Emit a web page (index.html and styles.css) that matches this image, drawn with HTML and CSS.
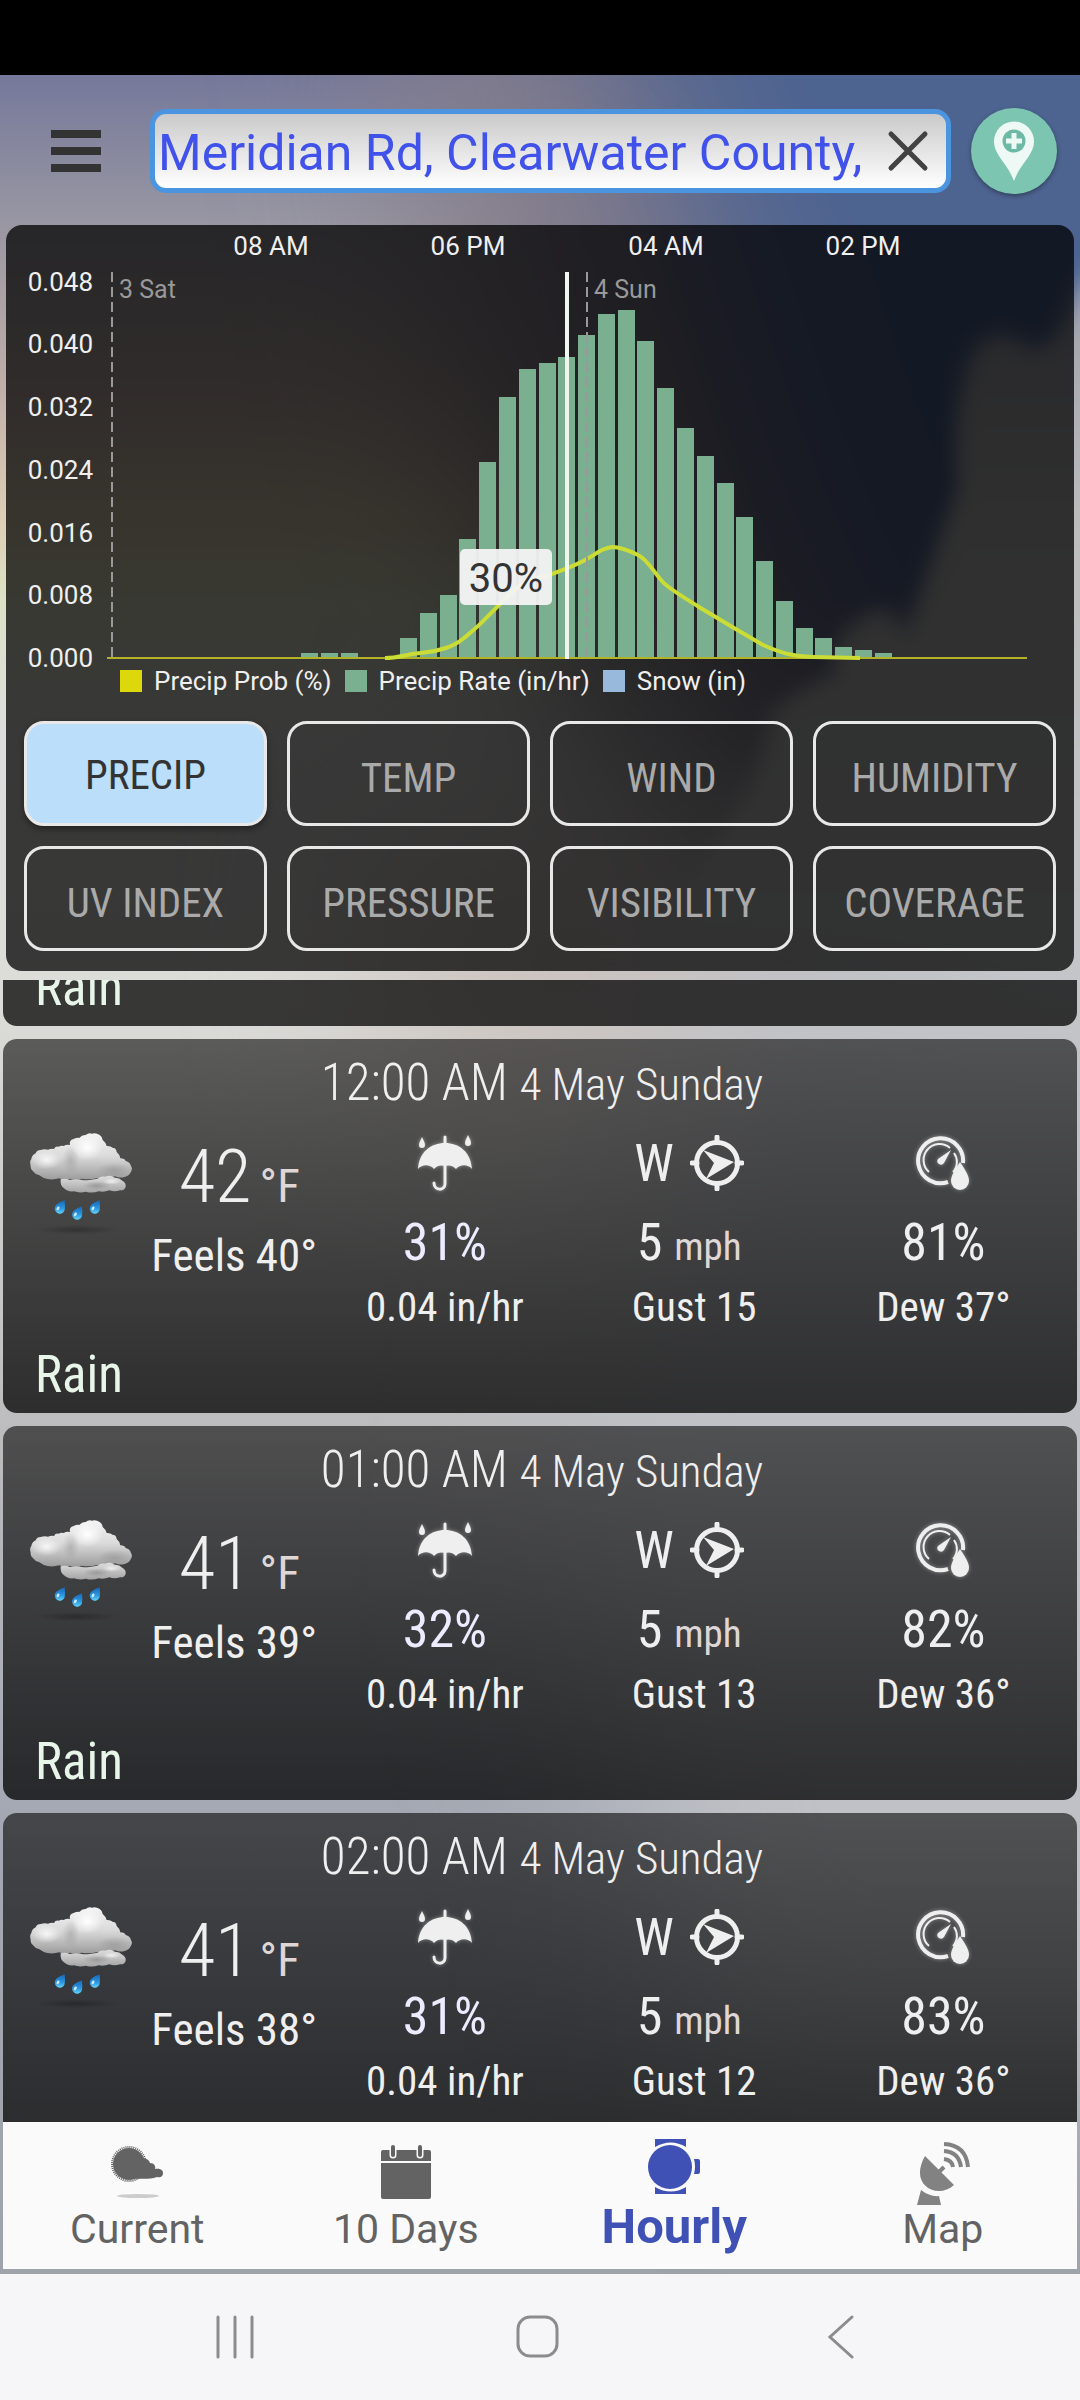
FILE: index.html
```html
<!DOCTYPE html>
<html lang="en">
<head>
<meta charset="utf-8">
<meta name="viewport" content="width=device-width, initial-scale=1">
<title>Hourly forecast</title>
<link rel="stylesheet" href="styles.css">
</head>
<body>
<svg class="defs" aria-hidden="true">
  <defs>
    <linearGradient id="cloudBack" x1="0" y1="0" x2="0" y2="1"><stop offset="0" stop-color="#f4f4f4"/><stop offset=".5" stop-color="#dadada"/><stop offset="1" stop-color="#9c9c9c"/></linearGradient>
    <linearGradient id="cloudFront" x1="0" y1="0" x2="0" y2="1"><stop offset="0" stop-color="#dedede"/><stop offset="1" stop-color="#a4a4a4"/></linearGradient>
    <radialGradient id="cloudGlow"><stop offset="0" stop-color="#fff"/><stop offset="1" stop-color="#fff" stop-opacity="0"/></radialGradient>
    <radialGradient id="cloudShade"><stop offset="0" stop-color="#8c8c8c" stop-opacity=".7"/><stop offset="1" stop-color="#8c8c8c" stop-opacity="0"/></radialGradient>
    <radialGradient id="ground"><stop offset="0" stop-opacity=".25"/><stop offset="1" stop-opacity="0"/></radialGradient>
    <linearGradient id="drop" x1="0" y1="0" x2="0" y2="1"><stop offset="0" stop-color="#1767b8"/><stop offset=".6" stop-color="#2b97e0"/><stop offset="1" stop-color="#63d2fb"/></linearGradient>
  </defs>
  <symbol id="i-rain" viewBox="60 66 306 306">
    <ellipse cx="200" cy="359" rx="125" ry="14" fill="url(#ground)"/>
    <path fill="url(#cloudBack)" d="M112 207Q98 204 88 196Q74 192 69 184Q60 177 62 166Q58 154 64 147Q66 135 77 130Q81 120 92 120Q104 116 114 119Q124 115 132 117Q136 108 146 110Q154 105 161 108Q170 102 180 105Q177 91 189 88Q198 82 208 84Q216 74 227 75Q236 67 246 71Q258 68 269 75Q277 80 278 90Q288 98 290 108Q301 107 309 114Q318 113 320 126Q329 133 331 145Q344 145 347 153Q360 156 363 168Q369 177 362 187Q358 197 346 200Q330 206 316 199Q290 206 262 204Q238 210 214 206Q196 212 178 206Q162 212 148 205Q130 210 112 207Z"/>
    <ellipse cx="232" cy="112" rx="48" ry="38" fill="url(#cloudGlow)"/>
    <ellipse cx="110" cy="150" rx="45" ry="28" fill="url(#cloudGlow)" opacity=".8"/>
    <ellipse cx="182" cy="150" rx="26" ry="42" fill="url(#cloudShade)" opacity=".6"/>
    <ellipse cx="312" cy="182" rx="52" ry="24" fill="url(#cloudShade)" opacity=".7"/>
    <path fill="url(#cloudFront)" d="M152 208Q166 204 180 210Q200 205 220 211Q246 210 262 206Q272 198 286 200Q302 194 314 203Q328 202 337 212Q349 219 347 230Q344 242 330 241Q314 247 298 241Q282 248 266 244Q246 251 228 245Q208 250 192 244Q172 246 162 235Q150 228 152 208Z"/>
    <ellipse cx="260" cy="227" rx="42" ry="13" fill="url(#cloudShade)"/>
    <ellipse cx="305" cy="214" rx="28" ry="10" fill="url(#cloudGlow)" opacity=".7"/>
    <g id="drops">
      <g id="one"><path fill="url(#drop)" d="M164 271Q166 290 164 301A15.500 15.500 0 1 1 139 284Q148 276 164 271Z"/><ellipse cx="144" cy="295" rx="4" ry="6" fill="#c9ecff" transform="rotate(30 144 295)"/></g>
      <use href="#one" x="52" y="18"/>
      <use href="#one" x="105"/>
    </g>
  </symbol>
  <symbol id="i-umbrella" viewBox="0 0 54 56">
    <path d="M27 2v8M27 30v19c0 7-11 7-11-1" fill="none" stroke="currentColor" stroke-width="3" stroke-linecap="round"/>
    <path fill="currentColor" d="M0 34C1 17 13 8 27 8s26 9 27 26c-4-5-12-5-16 0-3-4-8-4-11-3-3-1-8-1-11 3-4-5-12-5-16 0ZM4 2c2 4 3 6 3 8a3 3 0 0 1-6 0c0-2 1-4 3-8Zm46-2c2 4 3 6 3 8a3 3 0 0 1-6 0c0-2 1-4 3-8Z"/>
  </symbol>
  <symbol id="i-compass" viewBox="0 0 54 56">
    <circle cx="27" cy="28" r="20.500" fill="none" stroke="currentColor" stroke-width="5"/>
    <path d="M27 2v5M27 49v5M2 28h5M47 28h5" stroke="currentColor" stroke-width="5" stroke-linecap="round"/>
    <path fill="currentColor" d="m13 15 31 12-28 17 8-16Z"/>
  </symbol>
  <symbol id="i-humidity" viewBox="0 0 54 56">
    <path d="M47 28A22.500 22.500 0 1 0 32 47" fill="none" stroke="currentColor" stroke-width="4"/>
    <path d="M13 37A15 15 0 0 1 34 13M38 18a15 15 0 0 1-1 19" fill="none" stroke="currentColor" stroke-width="2"/>
    <path fill="currentColor" d="M35 15 28 28a3.500 3.500 0 1 1-6-4Z"/>
    <path fill="currentColor" d="M44 27c6 9 9 14 9 19a9 9 0 0 1-18 0c0-5 3-10 9-19Z"/>
  </symbol>
</svg>

<div class="phone">
  <div class="status"></div>
  <main class="app">
    <svg class="sky" viewBox="0 0 1080 2200" preserveAspectRatio="none" aria-hidden="true">
      <defs>
        <linearGradient id="base" x1="0" y1="0" x2="0" y2="1">
          <stop offset="0" stop-color="#75789a"/><stop offset=".06" stop-color="#9594a2"/><stop offset=".14" stop-color="#bfaea9"/><stop offset=".2" stop-color="#dccdb4"/><stop offset=".24" stop-color="#dde2c6"/><stop offset=".3" stop-color="#dedede"/><stop offset=".42" stop-color="#dcdcd8"/><stop offset=".62" stop-color="#bcbcbe"/><stop offset=".79" stop-color="#a3a8b2"/><stop offset="1" stop-color="#9fa4aa"/>
        </linearGradient>
        <linearGradient id="bank" x1="0" y1="0" x2="0" y2="1"><stop offset="0" stop-color="#9a9ca8"/><stop offset=".4" stop-color="#bdbdbd"/><stop offset="1" stop-color="#c4c6c8"/></linearGradient>
        <filter id="soft" x="-50%" y="-50%" width="200%" height="200%"><feGaussianBlur stdDeviation="90"/></filter>
        <filter id="edge" x="-50%" y="-50%" width="200%" height="200%"><feGaussianBlur stdDeviation="10"/></filter>
      </defs>
      <rect width="1080" height="2200" fill="url(#base)"/>
      <g filter="url(#soft)">
        <path fill="#857e8a" d="M380-100H1200V660L800 820 620 680 460 300Z"/>
        <path fill="#4d6490" d="M480-300H1500V760H920L760 440 660 130Z"/>
        <path fill="#c8bdb8" d="M380 760 700 800 660 1000 400 1000Z"/>
        <path fill="#bfc1c6" d="M680 860H1300V2000H700L560 1500Z"/>
      </g>
      <path filter="url(#edge)" fill="url(#bank)" d="M1130 165Q1080 195 1068 240Q1045 285 1025 270Q985 245 968 290Q950 350 958 410Q935 480 905 560Q890 520 860 545Q830 560 835 600Q800 610 770 640Q760 700 730 740L660 860 1150 900Z"/>
    </svg>

    <header class="top">
      <button class="menu" type="button" aria-label="Menu"><span></span><span></span><span></span></button>
      <div class="search">
        <input type="text" aria-label="Location" value="Meridian Rd, Clearwater County,">
        <button type="button" aria-label="Clear"><svg width="44" height="44" viewBox="0 0 44 44"><path d="m5 5 34 34M39 5 5 39" stroke="#424242" stroke-width="5" stroke-linecap="round"/></svg></button>
      </div>
      <button class="pin" type="button" aria-label="Add location"><svg width="86" height="86" viewBox="0 0 86 86"><path fill="#eef8f5" d="M43 73C37 56 23 47 23 33.500a20 20 0 0 1 40 0C63 47 49 56 43 73Z"/><circle cx="43" cy="33" r="11.500" fill="#6cb9a5"/><path d="M43 25v16M35 33h16" stroke="#eef8f5" stroke-width="5"/></svg></button>
    </header>

    <section class="panel">
      <svg class="chart" viewBox="6 225 1068 440" role="img" aria-label="Precipitation chart">
        <g class="axis" text-anchor="middle"><text x="271" y="255">08 AM</text><text x="468" y="255">06 PM</text><text x="666" y="255">04 AM</text><text x="863" y="255">02 PM</text></g>
        <g class="axis" text-anchor="end"><text x="93" y="291">0.048</text><text x="93" y="353">0.040</text><text x="93" y="416">0.032</text><text x="93" y="479">0.024</text><text x="93" y="542">0.016</text><text x="93" y="604">0.008</text><text x="93" y="667">0.000</text></g>
        <g class="day"><text x="119" y="298">3 Sat</text><text x="594" y="298">4 Sun</text></g>
        <path class="bars" d="M301 659v-6h17v6zM321 659v-6h17v6zM341 659v-6h17v6zM400 659v-21h17v21zM420 659v-46h17v46zM440 659v-64h17v64zM459 659v-120h17v120zM479 659v-197h17v197zM499 659v-262h17v262zM519 659v-290h17v290zM539 659v-296h17v296zM558 659v-302h17v302zM578 659v-324h17v324zM598 659v-345h17v345zM618 659v-349h17v349zM637 659v-318h17v318zM657 659v-271h17v271zM677 659v-231h17v231zM697 659v-203h17v203zM717 659v-176h17v176zM736 659v-142h17v142zM756 659v-98h17v98zM776 659v-58h17v58zM796 659v-31h17v31zM815 659v-21h17v21zM835 659v-12h17v12zM855 659v-9h17v9zM875 659v-6h17v6z"/>
        <path class="base" d="M107 658H1027"/>
        <path class="prob" d="M385 658C398 658 408 654 421 653S440 650 446 648 458 643 464 638 479 626 486 618L507 597C516 588 524 581 536 578S547 576 552 574 575 566 587 559 601 549 612 547C620 547 630 551 638 555 650 561 656 577 666 585S688 600 699 607L734 628 763 645C772 649 780 652 788 654S802 657 813 657L860 658"/>
        <path class="dash" d="M112 272V658M587 272V658"/>
        <path class="cursor" d="M567 272V659"/>
        <rect class="tip" x="460" y="549" width="92" height="56" rx="5"/>
        <text class="tiptext" x="506" y="592" text-anchor="middle">30%</text>
      </svg>
      <ul class="legend">
        <li><i class="k-prob"></i>Precip Prob (%)</li>
        <li><i class="k-rate"></i>Precip Rate (in/hr)</li>
        <li><i class="k-snow"></i>Snow (in)</li>
      </ul>
      <div class="modes">
        <button class="on" type="button">PRECIP</button><button type="button">TEMP</button><button type="button">WIND</button><button type="button">HUMIDITY</button>
        <button type="button">UV INDEX</button><button type="button">PRESSURE</button><button type="button">VISIBILITY</button><button type="button">COVERAGE</button>
      </div>
    </section>

    <section class="list">
      <article class="card cut"><p class="desc">Rain</p></article>

      <article class="card">
        <h2>12:00 AM <small>4 May Sunday</small></h2>
        <div class="row">
          <svg class="weather"><use href="#i-rain"/></svg>
          <div class="temp"><p class="deg">42<small>°F</small></p><p class="feels">Feels 40°</p></div>
          <div class="stat"><div class="ic"><svg class="glow"><use href="#i-umbrella"/></svg></div><p class="big lilac">31%</p><p class="sub">0.04 in/hr</p></div>
          <div class="stat"><div class="ic wind">W<svg><use href="#i-compass"/></svg></div><p class="big wind">5 <small>mph</small></p><p class="sub">Gust 15</p></div>
          <div class="stat"><div class="ic"><svg class="glow"><use href="#i-humidity"/></svg></div><p class="big">81%</p><p class="sub">Dew 37°</p></div>
        </div>
        <p class="desc">Rain</p>
      </article>

      <article class="card">
        <h2>01:00 AM <small>4 May Sunday</small></h2>
        <div class="row">
          <svg class="weather"><use href="#i-rain"/></svg>
          <div class="temp"><p class="deg">41<small>°F</small></p><p class="feels">Feels 39°</p></div>
          <div class="stat"><div class="ic"><svg class="glow"><use href="#i-umbrella"/></svg></div><p class="big lilac">32%</p><p class="sub">0.04 in/hr</p></div>
          <div class="stat"><div class="ic wind">W<svg><use href="#i-compass"/></svg></div><p class="big wind">5 <small>mph</small></p><p class="sub">Gust 13</p></div>
          <div class="stat"><div class="ic"><svg class="glow"><use href="#i-humidity"/></svg></div><p class="big">82%</p><p class="sub">Dew 36°</p></div>
        </div>
        <p class="desc">Rain</p>
      </article>

      <article class="card">
        <h2>02:00 AM <small>4 May Sunday</small></h2>
        <div class="row">
          <svg class="weather"><use href="#i-rain"/></svg>
          <div class="temp"><p class="deg">41<small>°F</small></p><p class="feels">Feels 38°</p></div>
          <div class="stat"><div class="ic"><svg class="glow"><use href="#i-umbrella"/></svg></div><p class="big lilac">31%</p><p class="sub">0.04 in/hr</p></div>
          <div class="stat"><div class="ic wind">W<svg><use href="#i-compass"/></svg></div><p class="big wind">5 <small>mph</small></p><p class="sub">Gust 12</p></div>
          <div class="stat"><div class="ic"><svg class="glow"><use href="#i-humidity"/></svg></div><p class="big">83%</p><p class="sub">Dew 36°</p></div>
        </div>
      </article>
    </section>

    <nav class="tabs">
      <a href="#current">
        <svg viewBox="0 0 64 64"><circle cx="24" cy="23" r="16" fill="#636363"/><circle cx="24" cy="23" r="17" fill="none" stroke="#636363" stroke-width="2" stroke-dasharray="1 1"/><path fill="#636363" d="M36 18c5-1 8 0 9 4 4 0 6 3 5 6 5-1 8 1 8 4 0 4-3 5-6 4-9 3-17 1-23 2Z"/><ellipse cx="33" cy="55" rx="21" ry="2" fill="#ccc"/></svg>
        Current</a>
      <a href="#days">
        <svg viewBox="0 0 64 64"><path fill="#636363" d="M9 9h46a2 2 0 0 1 2 2v9H7v-9a2 2 0 0 1 2-2ZM7 22h50v34a2 2 0 0 1-2 2H9a2 2 0 0 1-2-2Z"/><path d="M19 6v8M46 6v8" stroke="#fafafa" stroke-width="7" stroke-linecap="round"/><path d="M19 6v8M46 6v8" stroke="#636363" stroke-width="4" stroke-linecap="round"/></svg>
        10 Days</a>
      <a class="on" href="#hourly" aria-current="page">
        <svg viewBox="0 0 64 64"><path fill="#3f51b5" d="M13 0h31v8q-15-9-31 0ZM13 55h31v-7q-15 9-31 0ZM52 20h4q2 0 2 2v11q0 2-2 2h-4q2-7 0-15Z"/><circle cx="28" cy="28" r="22" fill="#3f51b5"/></svg>
        Hourly</a>
      <a href="#map">
        <svg viewBox="0 0 64 64"><path fill="#828282" d="M14 15 43 44C27 59-3 45 14 15ZM10 49q9 7 18 6l2 9H6Z"/><path d="m28 31 5-5" stroke="#828282" stroke-width="4"/><path d="M33 18q8 1 9 8M33 10q15 1 17 16M33 3q22 1 24 23" fill="none" stroke="#828282" stroke-width="4"/></svg>
        Map</a>
    </nav>
  </main>
  <footer class="sysbar">
    <button type="button" aria-label="Recents"><svg width="44" height="44" viewBox="0 0 44 44"><path d="M5 2v40M22 2v40M39 2v40"/></svg></button>
    <button type="button" aria-label="Home"><svg width="44" height="44" viewBox="0 0 44 44"><rect x="2" y="2" width="39" height="39" rx="12"/></svg></button>
    <button type="button" aria-label="Back"><svg width="44" height="44" viewBox="0 0 44 44"><path d="M33 2 11 22l22 20"/></svg></button>
  </footer>
</div>
</body>
</html>
```
FILE: styles.css
```css
* { box-sizing: border-box; margin: 0; padding: 0; }
body { font-family: Roboto, sans-serif; color: #efefef; }
button { font: inherit; color: inherit; background: none; border: 0; cursor: pointer; }
small { font-size: inherit; line-height: 1; }
.defs { position: absolute; width: 0; height: 0; }

.phone { display: flex; flex-direction: column; height: 100vh; overflow: hidden; }
.status { flex: none; height: 75px; background: #000; }
.app { position: relative; flex: 1; min-height: 0; display: flex; flex-direction: column; padding-bottom: 5px; }
.sky { position: absolute; inset: 0; width: 100%; height: 100%; z-index: -1; }

/* header */
.top { flex: none; display: flex; align-items: center; gap: 20px; height: 150px; padding: 2px 23px 0 51px; }
.menu { display: flex; flex-direction: column; gap: 9px; width: 50px; margin-right: 29px; }
.menu span { height: 8px; background: #333; }
.search { flex: 1; min-width: 0; display: flex; align-items: center; height: 84px; padding: 0 16px 0 3px; border: 5px solid #4a94e0; border-radius: 16px; background: linear-gradient(#cacaca, #fff); }
.search input { flex: 1; min-width: 0; height: 66px; padding-top: 3px; border: 0; outline: 0; background: none; font: 50px Roboto, sans-serif; color: #4152ea; }
.search button, .pin { display: flex; }
.pin { border-radius: 50%; background: #7cc5b1; box-shadow: 0 2px 4px rgba(0, 0, 0, .35); }

/* chart panel */
.panel { flex: none; margin: 0 6px; padding-bottom: 20px; border-radius: 16px; background: rgba(0, 0, 0, .75); }
.chart { display: block; width: 100%; overflow: visible; }
.axis { font-size: 26px; fill: #efefef; }
.day { font-size: 25px; fill: #999; }
.bars { fill: #7aaf90; }
.base { stroke: #b3b32a; stroke-width: 2; }
.prob { fill: none; stroke: #cbdc35; stroke-width: 4; }
.dash { stroke: #999; stroke-width: 2; stroke-dasharray: 10 5; }
.cursor { stroke: #eef8ee; stroke-width: 4; }
.tip { fill: #f3f3f3; fill-opacity: .95; }
.tiptext { font-size: 40px; fill: #333; }
.legend { display: flex; gap: 13px; padding: 1px 0 0 114px; list-style: none; font-size: 26px; line-height: 30px; }
.legend li { display: flex; align-items: center; gap: 12px; }
.legend i { width: 22px; height: 22px; }
.k-prob { background: #dcd80c; }
.k-rate { background: #7aaf90; }
.k-snow { background: #98b8dc; }
.modes { display: grid; grid-template-columns: repeat(4, 1fr); gap: 20px; margin: 25px 18px 0; font-family: "Roboto Condensed", Roboto, sans-serif; }
.modes button { height: 105px; padding-top: 8px; border: 3px solid #e8e8e8; border-radius: 20px; font-size: 41px; color: #aaa; }
.modes .on { padding-top: 2px; background: #bbdefb; color: #333; box-shadow: 0 3px 6px rgba(0, 0, 0, .4); }

/* hourly cards */
.list { flex: 1; min-height: 0; overflow: hidden; display: flex; flex-direction: column; gap: 13px; margin: 9px 3px 0; font-family: "Roboto Condensed", Roboto, sans-serif; }
.card { flex: none; min-height: 374px; padding: 12px 0 10px; border-radius: 14px; background: linear-gradient(rgba(0, 0, 0, .58), rgba(0, 0, 0, .76)); }
.cut { display: flex; flex-direction: column; justify-content: flex-end; height: 46px; min-height: 0; padding-top: 0; overflow: hidden; border-radius: 0 0 14px 14px; background: rgba(0, 0, 0, .75); }
.cut .desc { margin: 0; }
h2 { height: 64px; padding-left: 4px; font-family: "Roboto Condensed Light", "Roboto Condensed", sans-serif; font-weight: 300; font-size: 51px; line-height: 64px; text-align: center; }
h2 small { font-size: 45px; }
.row { display: grid; grid-template-columns: 145fr 172fr 249fr 249fr 249fr; margin-top: 16px; padding-right: 9px; }
.weather { width: 102px; height: 102px; margin: 1px 0 0 27px; }
.temp, .stat { text-align: center; white-space: nowrap; }
.deg { display: flex; justify-content: center; align-items: baseline; gap: 8px; padding-left: 10px; font-family: "Roboto Condensed Light", "Roboto Condensed", sans-serif; font-weight: 300; font-size: 75px; line-height: 90px; }
.deg small { font-family: "Roboto Condensed", sans-serif; font-weight: 400; font-size: 47px; line-height: 1; color: #dfd6d6; }
.feels { margin-top: 7px; font-size: 45px; line-height: 56px; }
.ic { display: flex; justify-content: center; align-items: center; gap: 16px; height: 64px; font-size: 52px; }
.ic svg { width: 54px; height: 56px; }
.wind { padding-right: 10px; }
.glow { filter: drop-shadow(0 0 2px rgba(255, 255, 255, .4)); }
.big { margin-top: 16px; font-size: 52px; line-height: 64px; }
.big small { font-size: 39px; color: #dfd6d6; }
.lilac { color: #ecebff; }
.sub { margin-top: 8px; font-size: 41px; line-height: 48px; }
.desc { margin-top: 16px; padding-left: 32px; font-size: 51px; line-height: 56px; color: #e8f5e9; }

/* bottom tabs */
.tabs { flex: none; display: grid; grid-template-columns: repeat(4, 1fr); height: 147px; margin: 0 3px; background: #fafafa; }
.tabs a { display: flex; flex-direction: column; align-items: center; padding-top: 19px; font-size: 41px; line-height: 48px; color: #636363; text-decoration: none; }
.tabs svg { width: 64px; height: 64px; }
.tabs .on { padding-top: 17px; font-size: 49px; font-weight: 700; color: #3f51b5; }

/* system bar */
.sysbar { flex: none; display: grid; grid-template-columns: repeat(3, 1fr); align-items: center; height: 126px; padding: 0 87px 0 83px; background: #f6f6f9; }
.sysbar button { display: flex; justify-content: center; }
.sysbar svg { fill: none; stroke: #8c8c8c; stroke-width: 3; stroke-linecap: round; }
```
